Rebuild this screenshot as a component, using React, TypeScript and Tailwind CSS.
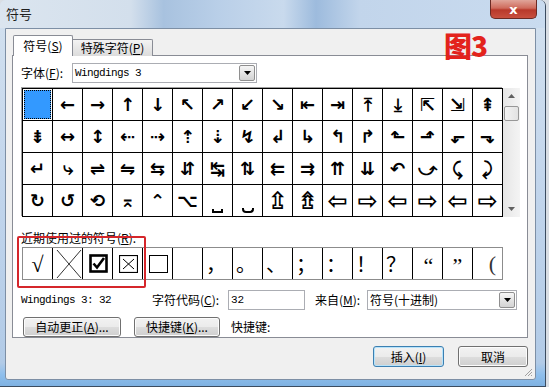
import React from "react";

const ROWS: string[][] = [
  ["", "←", "→", "↑", "↓", "↖", "↗", "↙", "↘", "⇤", "⇥", "⤒", "⤓", "⇱", "⇲", "⇞"],
  ["⇟", "↔", "↕", "⇠", "⇢", "⇡", "⇣", "↯", "↲", "↳", "↰", "↱", "⬑", "⬏", "⬐", "⬎"],
  ["↵", "⤷", "⇌", "⇋", "⇆", "⇵", "↹", "⇅", "⇇", "⇉", "⇈", "⇊", "↶", "⤻", "⤹", "⤸"],
  ["↻", "↺", "⟲", "⌅", "⌃", "⌥", "_a", "_b", "⇫", "⇯", "⇦", "⇨", "⇦", "⇨", "⇦", "⇨"],
];

// hollow arrows are drawn bigger in Wingdings 3
const BIG = ["⇫", "⇯", "⇦", "⇨"];

const PUNCT = ["，", "。", "、", "；", "：", "！", "？"];

function DropBtn() {
  return (
    <div className="w-[16px] h-[16px] mr-px border border-[#8f8f8f] rounded-[2px] bg-[linear-gradient(#f6f6f6_0%,#e4e4e4_50%,#d3d3d3_100%)] flex items-center justify-center">
      <svg width="7" height="4" viewBox="0 0 7 4">
        <path d="M0 0h7L3.5 4z" fill="#000" />
      </svg>
    </div>
  );
}

function Btn({ children, className, primary }: { children: React.ReactNode; className: string; primary?: boolean }) {
  return (
    <div
      className={`flex items-center justify-center rounded-[3px] border bg-[linear-gradient(#f2f2f2_0%,#ebebeb_50%,#dddddd_51%,#cfcfcf_100%)] text-[12px] leading-none ${
        primary ? "border-[#3c7fb1] shadow-[inset_0_0_0_1px_#b6e3fb]" : "border-[#707070] shadow-[inset_0_0_0_1px_#fcfcfc]"
      } ${className}`}
    >
      {children}
    </div>
  );
}

function GridCell({ g, idx }: { g: string; idx: number }) {
  if (idx === 0) {
    return (
      <div className="bg-white p-px">
        <div className="w-full h-full bg-[#3399ff] outline outline-1 outline-dotted outline-black -outline-offset-1" />
      </div>
    );
  }
  if (g === "_a") {
    return (
      <div className="bg-white flex items-end justify-center pb-[3px]">
        <div className="w-[11px] h-[4px] border-x-2 border-b-2 border-black" />
      </div>
    );
  }
  if (g === "_b") {
    return (
      <div className="bg-white flex items-end justify-center pb-[3px]">
        <div className="w-[12px] h-[5px] border-x-2 border-b-2 border-black rounded-b-[4px]" />
      </div>
    );
  }
  const big = BIG.includes(g);
  return (
    <div
      className={`bg-white flex items-center justify-center font-['DejaVu_Sans',sans-serif] font-bold leading-none ${
        big ? "text-[24px]" : "text-[18px]"
      }`}
    >
      {g}
    </div>
  );
}

export default function App() {
  return (
    <div className="w-[549px] h-[387px] overflow-hidden bg-[#d9dee4] font-['Noto_Sans_CJK_SC',sans-serif] text-[12px] text-black">
      <div className="relative w-[546px] h-[387px] rounded-t-[6px] border-r border-b border-[#3b4c60] bg-[linear-gradient(180deg,#d3e1ef_0%,#c3d6ec_45%,#b2cbe7_94%,#8fbfec_97%,#7fb2e2_100%)]">
        {/* title bar */}
        <div className="h-[28px] flex items-start justify-between rounded-t-[6px] bg-[linear-gradient(90deg,#dbe5ef_0%,#d3dfec_24%,#a8c2df_30%,#b9cfe8_40%,#c9daed_52%,#9dbbdd_58%,#c2d5eb_66%,#c9dbef_100%)]">
          <div className="pl-[6px] pt-[7px] leading-none text-[13px] text-[#1e1e1e]">符号</div>
          <div className="mr-[8px] w-[47px] h-[19px] rounded-b-[5px] border border-t-0 border-[#6b2a24] bg-[linear-gradient(#e0a59a_0%,#cf6b5c_45%,#b8392b_55%,#c8503f_100%)] flex items-center justify-center">
            <span className="font-['DejaVu_Sans',sans-serif] font-bold text-[13px] leading-none text-white">x</span>
          </div>
        </div>

        {/* client area */}
        <div className="ml-[5px] w-[531px] h-[352px] border border-[#7d8fa5] bg-[#f0f0f0] rounded-b-[3px] flex flex-col">
          {/* tabs */}
          <div className="mt-[6px] ml-[7px] flex items-end h-[21px] relative z-10">
            <div className="w-[60px] h-[21px] border border-b-0 border-[#898c95] bg-white flex items-center justify-center leading-none text-[12px] rounded-t-[2px]">
              符号(<span className="underline">S</span>)
            </div>
            <div className="w-[80px] h-[17px] border border-l-0 border-b-0 border-[#898c95] bg-[linear-gradient(#f3f3f3,#dcdcdc)] flex items-center justify-center leading-none text-[12px] rounded-tr-[2px]">
              特殊字符(<span className="underline">P</span>)
            </div>
          </div>

          {/* tab panel */}
          <div className="-mt-px ml-[6px] w-[516px] h-[288px] border border-[#898c95] bg-white pl-[8px] flex flex-col">
            {/* font row */}
            <div className="mt-[7px] h-[20px] flex items-center">
              <div className="w-[51px] leading-none">
                字体(<span className="underline">F</span>):
              </div>
              <div className="w-[185px] h-[20px] border border-[#abadb3] bg-white flex items-center">
                <div className="flex-1 pl-[2px] font-['Liberation_Mono',monospace] text-[11px] tracking-[-0.6px] leading-none">Wingdings 3</div>
                <DropBtn />
              </div>
            </div>

            {/* symbol grid */}
            <div className="mt-[5px] ml-px flex">
              <div className="grid grid-cols-[repeat(16,29px)] grid-rows-[repeat(4,31px)] gap-px bg-black border border-black shadow-[-1px_-1px_0_#a0a0a0]">
                {ROWS.flat().map((g, i) => (
                  <GridCell key={i} g={g} idx={i} />
                ))}
              </div>
              <div className="w-[17px] h-[129px] bg-[linear-gradient(90deg,#e6e6e6,#f4f4f4)] flex flex-col items-center">
                <svg className="mt-[6px]" width="7" height="4" viewBox="0 0 7 4">
                  <path d="M3.5 0L7 4H0z" fill="#606060" />
                </svg>
                <div className="mt-[8px] w-[15px] h-[15px] rounded-[2px] border border-[#979797] bg-[linear-gradient(90deg,#f3f3f3,#e2e2e2)]" />
                <div className="flex-1" />
                <svg className="mb-[6px]" width="7" height="4" viewBox="0 0 7 4">
                  <path d="M0 0h7L3.5 4z" fill="#606060" />
                </svg>
              </div>
            </div>

            {/* recent label */}
            <div className="mt-[14px] h-[14px] leading-[14px]">
              近期使用过的符号(<span className="underline">R</span>):
            </div>

            {/* recent row */}
            <div className="mt-[2px] ml-px grid grid-cols-[repeat(16,29px)] grid-rows-[31px] gap-px bg-black border border-[#8c8c8c] w-[481px]">
              <div className="bg-white flex items-center justify-center font-['Liberation_Serif',serif] text-[22px] leading-none pt-[2px]">√</div>
              <div className="bg-white">
                <svg width="29" height="31" viewBox="0 0 29 31">
                  <path d="M4 2L28 30M28 2L4 30" stroke="#333" strokeWidth="1" fill="none" />
                </svg>
              </div>
              <div className="bg-white flex items-center pl-[6px]">
                <svg width="19" height="19" viewBox="0 0 19 19">
                  <rect x="1.5" y="1.5" width="16" height="16" stroke="#000" strokeWidth="2.6" fill="none" />
                  <path d="M4.5 9.5L8 13.5L15 4" stroke="#000" strokeWidth="2.6" fill="none" />
                </svg>
              </div>
              <div className="bg-white flex items-center pl-[6px]">
                <svg width="19" height="18" viewBox="0 0 19 18">
                  <rect x="0.5" y="0.5" width="18" height="17" stroke="#000" strokeWidth="1.2" fill="none" />
                  <path d="M4 4L15 14M15 4L4 14" stroke="#000" strokeWidth="1" fill="none" />
                </svg>
              </div>
              <div className="bg-white flex items-center pl-[6px]">
                <div className="w-[19px] h-[18px] border border-black" />
              </div>
              <div className="bg-white" />
              {PUNCT.map((p, i) => (
                <div key={i} className="bg-white flex items-center pl-[3px] text-[20px] leading-none">
                  {p}
                </div>
              ))}
              <div className="bg-white flex items-center justify-center font-['Liberation_Serif',serif] text-[22px] leading-none pt-[4px] pl-[2px]">“</div>
              <div className="bg-white flex items-center justify-center font-['Liberation_Serif',serif] text-[22px] leading-none pt-[4px]">”</div>
              <div className="bg-white flex items-center justify-end pr-[6px] font-['Liberation_Serif',serif] text-[22px] leading-none text-[#333]">(</div>
            </div>

            {/* info row */}
            <div className="mt-[10px] h-[20px] flex items-center leading-none">
              <div className="w-[131px] font-['Liberation_Mono',monospace] text-[11px] tracking-[-0.6px]">Wingdings 3: 32</div>
              <div className="w-[76px]">
                字符代码(<span className="underline">C</span>):
              </div>
              <div className="w-[77px] h-[20px] border border-[#abadb3] bg-white flex items-center pl-[2px] font-['Liberation_Mono',monospace] text-[11px]">32</div>
              <div className="ml-[10px] w-[52px]">
                来自(<span className="underline">M</span>):
              </div>
              <div className="w-[150px] h-[20px] border border-[#abadb3] bg-white flex items-center">
                <div className="flex-1 pl-[2px]">符号(十进制)</div>
                <DropBtn />
              </div>
            </div>

            {/* buttons row */}
            <div className="mt-[7px] h-[20px] flex items-center">
              <Btn className="ml-[2px] w-[98px] h-[20px]">
                自动更正(<span className="underline">A</span>)...
              </Btn>
              <Btn className="ml-[13px] w-[86px] h-[20px]">
                快捷键(<span className="underline">K</span>)...
              </Btn>
              <div className="ml-[11px] leading-none">快捷键:</div>
            </div>
          </div>

          {/* bottom buttons */}
          <div className="mt-[8px] pr-[7px] flex justify-end items-center">
            <Btn primary className="w-[71px] h-[21px]">
              插入(<span className="underline">I</span>)
            </Btn>
            <Btn className="ml-[14px] w-[70px] h-[21px]">取消</Btn>
          </div>
          <div className="flex-1 flex justify-end items-end pr-[2px] pb-[2px]">
            <svg width="10" height="10" viewBox="0 0 10 10">
              <path d="M9 2L2 9M9 5L5 9M9 8L8 9" stroke="#a0a0a0" strokeWidth="1" />
            </svg>
          </div>
        </div>

        {/* annotation overlays */}
        <div className="absolute left-[444px] top-[31px] text-[28px] leading-none font-black text-[#e3231c] tracking-[-1px]">图3</div>
        <div className="absolute left-[17px] top-[236px] w-[129px] h-[52px] border-2 border-[#d5262b] rounded-[2px]" />
      </div>
    </div>
  );
}
